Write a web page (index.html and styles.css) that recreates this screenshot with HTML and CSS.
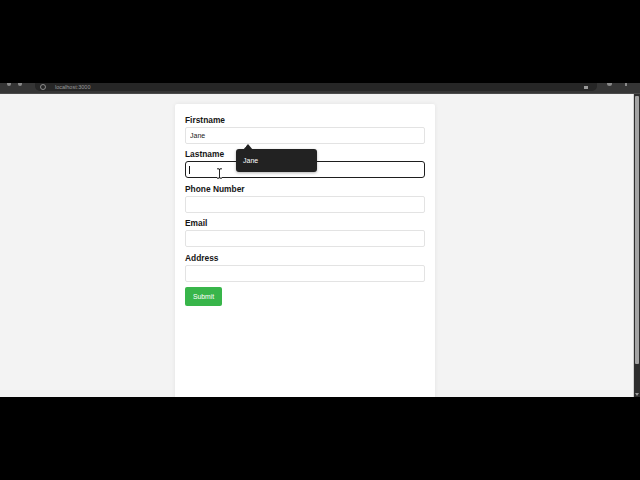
FILE: index.html
```html
<!DOCTYPE html>
<html>
<head>
<meta charset="utf-8">
<link rel="stylesheet" href="styles.css">
</head>
<body>
<div class="frame">
  <div class="black-top"></div>
  <div class="chrome">
    <span class="nav-icon"></span>
    <span class="nav-icon"></span>
    <div class="omnibox">
      <span class="site-icon"></span>
      <span class="url">localhost:3000</span>
      <span class="star"></span>
    </div>
    <span class="ext-icon"></span>
    <span class="menu-icon"></span>
  </div>
  <div class="viewport">
    <div class="page">
      <form class="card">
        <div class="field">
          <label class="label">Firstname</label>
          <input class="input" type="text" value="Jane">
        </div>
        <div class="field">
          <label class="label">Lastname</label>
          <div class="input focused"><span class="caret"></span></div>
        </div>
        <div class="field">
          <label class="label">Phone Number</label>
          <input class="input" type="text">
        </div>
        <div class="field">
          <label class="label">Email</label>
          <input class="input" type="text">
        </div>
        <div class="field">
          <label class="label">Address</label>
          <input class="input" type="text">
        </div>
        <button class="submit" type="button">Submit</button>

        <div class="tooltip">Jane</div>
        <svg class="ibeam" width="7" height="11" viewBox="0 0 7 11">
          <path d="M1 0.8h2v0.6h1v-0.6h2M3.5 1.2v8.6M1 10.2h2v-0.6h1v0.6h2" fill="none" stroke="#fff" stroke-width="2"/>
          <path d="M1 0.8h2v0.6h1v-0.6h2M3.5 1.2v8.6M1 10.2h2v-0.6h1v0.6h2" fill="none" stroke="#111" stroke-width="0.9"/>
        </svg>
      </form>
    </div>
    <div class="scrollbar"><div class="thumb"></div><div class="arrow"></div></div>
  </div>
</div>
</body>
</html>
```
FILE: styles.css
```css
html, body {
  margin: 0;
  padding: 0;
  background: #000;
  width: 640px;
  height: 480px;
  overflow: hidden;
}
.frame {
  display: flex;
  flex-direction: column;
  width: 640px;
  height: 480px;
}
.black-top {
  height: 83px;
  background: #000;
  flex: none;
}
.chrome {
  height: 10px;
  flex: none;
  background: #353535;
  border-bottom: 1px solid #4a4a4a;
  display: flex;
  align-items: flex-start;
  overflow: hidden;
}
.nav-icon {
  width: 4px;
  height: 3px;
  margin-left: 7px;
  background: #8a8a8a;
  border-radius: 0 0 2px 2px;
}
.omnibox {
  margin-left: 13px;
  width: 562px;
  height: 8px;
  background: #262626;
  border-radius: 0 0 5px 5px;
  display: flex;
  align-items: center;
  position: relative;
}
.site-icon {
  width: 6px;
  height: 6px;
  margin-left: 5px;
  border-radius: 50%;
  border: 1.2px solid #8c8c8c;
  box-sizing: border-box;
}
.url {
  margin-left: 9px;
  font-family: "Liberation Sans", Arial, sans-serif;
  font-size: 5.5px;
  line-height: 7px;
  color: #9a9a9a;
}
.star {
  margin-left: auto;
  margin-right: 9px;
  width: 4px;
  height: 3px;
  background: #9a9a9a;
}
.ext-icon {
  margin-left: 10px;
  width: 5px;
  height: 3px;
  border-radius: 0 0 3px 3px;
  background: #8a8a8a;
}
.menu-icon {
  margin-left: 13px;
  width: 2px;
  height: 3px;
  background: #8a8a8a;
}
.viewport {
  height: 303px;
  flex: none;
  display: flex;
  overflow: hidden;
}
.page {
  flex: 1;
  background: #f3f3f3;
  padding-top: 10px;
  overflow: hidden;
}
.card {
  position: relative;
  margin: 0 0 0 175px;
  width: 260px;
  min-height: 400px;
  box-sizing: border-box;
  padding: 10.7px 10px 10px;
  background: #fff;
  border-radius: 2px;
  box-shadow: 0 0 4px rgba(0, 0, 0, 0.07);
  font-family: "Liberation Sans", Arial, sans-serif;
}
.field {
  margin-bottom: 5.6px;
}
.label {
  display: block;
  font-size: 8.4px;
  line-height: 10px;
  font-weight: bold;
  color: #151515;
  margin-bottom: 2px;
}
.input {
  display: block;
  box-sizing: border-box;
  width: 240px;
  height: 17px;
  margin: 0;
  padding: 0 4px;
  border: 1px solid #e3e3e3;
  border-radius: 2px;
  background: #fff;
  font-family: "Liberation Sans", Arial, sans-serif;
  font-size: 7px;
  color: #222;
  outline: none;
}
.input.focused {
  position: relative;
  border: 1.5px solid #1e1e1e;
  border-radius: 3px;
}
.caret {
  position: absolute;
  left: 2.5px;
  top: 3.5px;
  width: 1px;
  height: 8px;
  background: #111;
}
.submit {
  display: block;
  width: 37px;
  height: 18.7px;
  padding: 0;
  border: none;
  border-radius: 2px;
  background: #38b54a;
  color: #fff;
  font-family: "Liberation Sans", Arial, sans-serif;
  font-size: 6.8px;
  margin-top: -0.6px;
}
.tooltip {
  position: absolute;
  left: 61px;
  top: 45px;
  width: 81px;
  height: 23px;
  box-sizing: border-box;
  padding: 7px 0 0 7px;
  background: #222;
  border-radius: 3px;
  box-shadow: 0 1px 3px rgba(0, 0, 0, 0.3);
  color: #fff;
  font-size: 7px;
  line-height: 9px;
}
.tooltip::before {
  content: "";
  position: absolute;
  left: 7px;
  top: -5.5px;
  border-left: 5px solid transparent;
  border-right: 5px solid transparent;
  border-bottom: 6px solid #222;
}
.ibeam {
  position: absolute;
  left: 41px;
  top: 63.5px;
}
.scrollbar {
  width: 6px;
  flex: none;
  background: #2d2d2d;
  border-left: 1px solid #d0d0d0;
  display: flex;
  flex-direction: column;
}
.thumb {
  margin: 2px 0 0 1px;
  width: 4px;
  height: 268px;
  background: #a3a3a3;
  border-radius: 1px;
}
.arrow {
  margin: auto 0 1px 1px;
  width: 0;
  height: 0;
  border-left: 2px solid transparent;
  border-right: 2px solid transparent;
  border-top: 3px solid #9a9a9a;
}
```
